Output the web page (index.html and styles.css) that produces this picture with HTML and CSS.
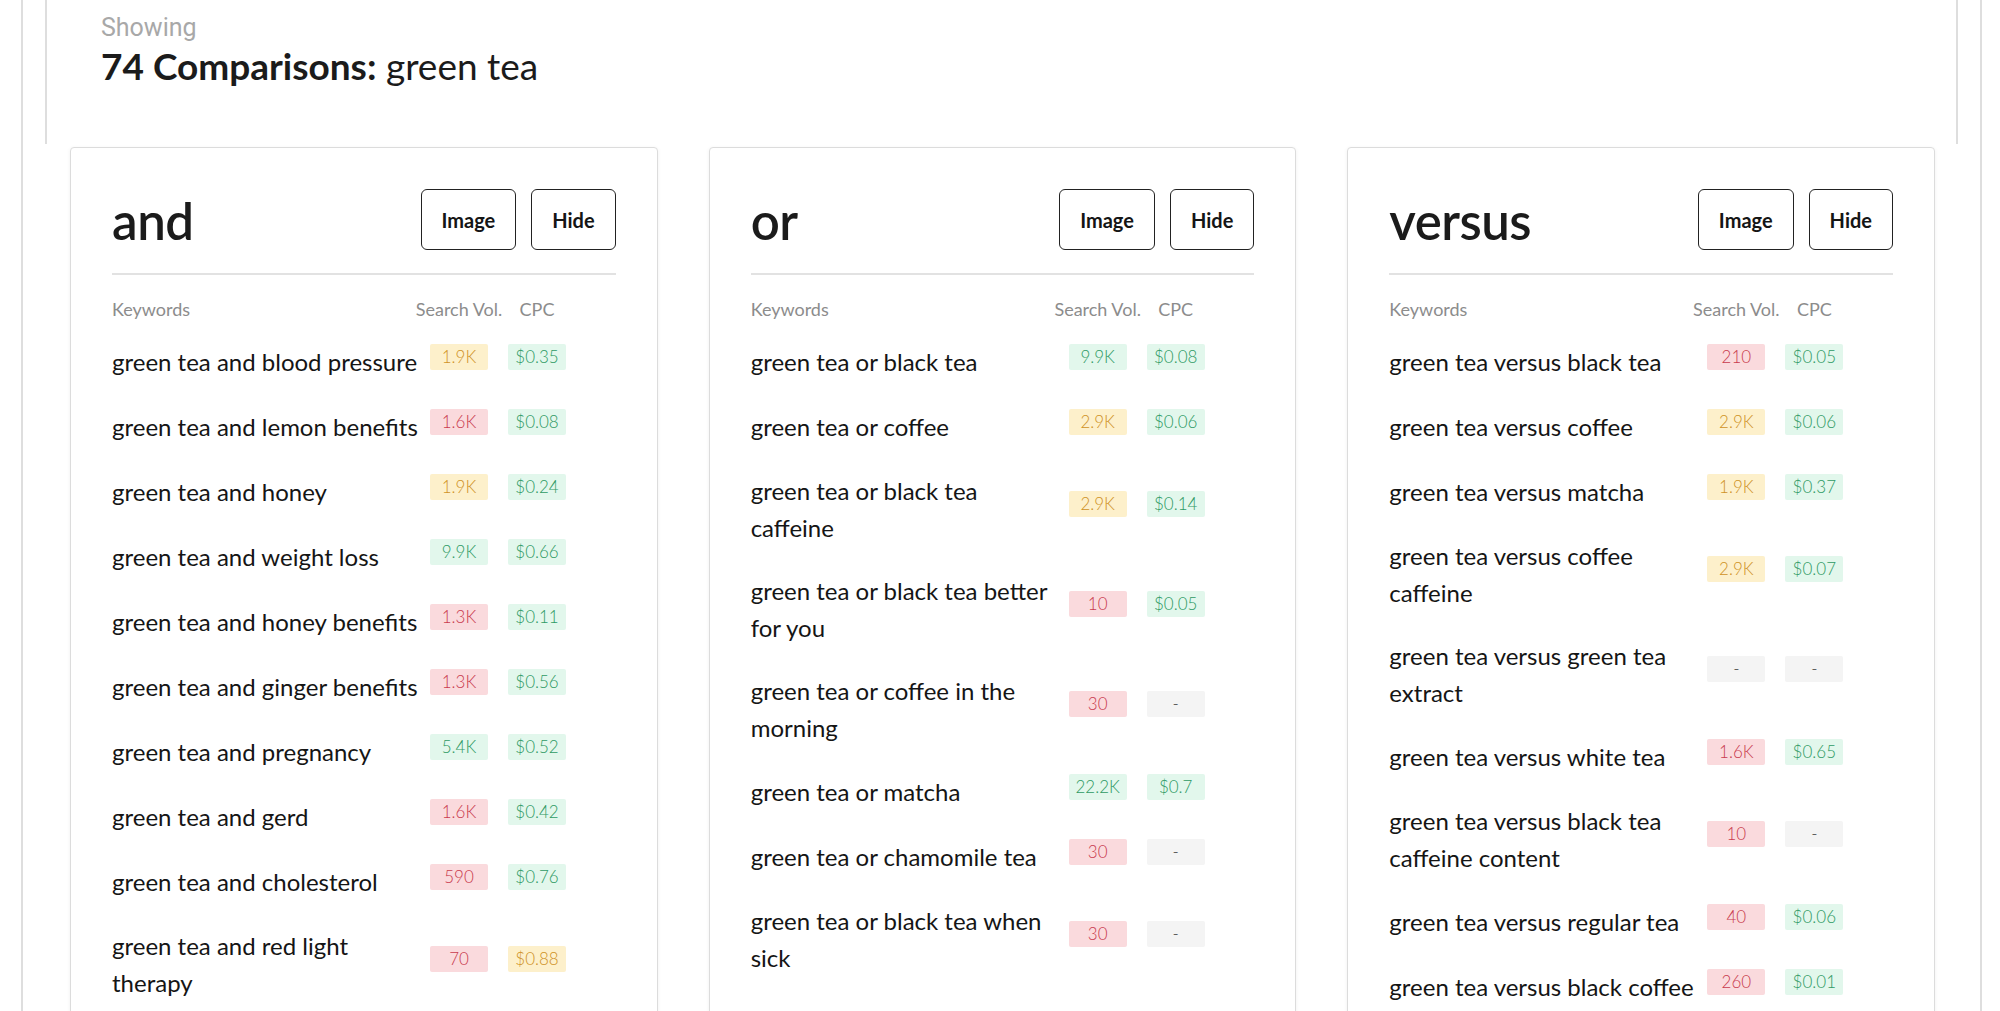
FILE: index.html
```html
<!DOCTYPE html>
<html lang="en">
<head>
<meta charset="utf-8">
<title>74 Comparisons: green tea</title>
<link rel="stylesheet" href="styles.css">
</head>
<body>
<div class="page">
  <header class="summary">
    <div class="showing">Showing</div>
    <h1 class="count"><strong>74 Comparisons:</strong> green tea</h1>
  </header>

  <main class="cards">
    <section class="card">
      <div class="card-head">
        <h2 class="card-title">and</h2>
        <div class="actions"><button class="btn">Image</button><button class="btn">Hide</button></div>
      </div>
      <div class="row head-row"><span class="kw">Keywords</span><span class="col vol">Search Vol.</span><span class="col cpc">CPC</span></div>
      <div class="row"><span class="kw">green tea and blood pressure</span><span class="badge vol y">1.9K</span><span class="badge cpc g">$0.35</span></div>
      <div class="row"><span class="kw">green tea and lemon benefits</span><span class="badge vol r">1.6K</span><span class="badge cpc g">$0.08</span></div>
      <div class="row"><span class="kw">green tea and honey</span><span class="badge vol y">1.9K</span><span class="badge cpc g">$0.24</span></div>
      <div class="row"><span class="kw">green tea and weight loss</span><span class="badge vol g">9.9K</span><span class="badge cpc g">$0.66</span></div>
      <div class="row"><span class="kw">green tea and honey benefits</span><span class="badge vol r">1.3K</span><span class="badge cpc g">$0.11</span></div>
      <div class="row"><span class="kw">green tea and ginger benefits</span><span class="badge vol r">1.3K</span><span class="badge cpc g">$0.56</span></div>
      <div class="row"><span class="kw">green tea and pregnancy</span><span class="badge vol g">5.4K</span><span class="badge cpc g">$0.52</span></div>
      <div class="row"><span class="kw">green tea and gerd</span><span class="badge vol r">1.6K</span><span class="badge cpc g">$0.42</span></div>
      <div class="row"><span class="kw">green tea and cholesterol</span><span class="badge vol r">590</span><span class="badge cpc g">$0.76</span></div>
      <div class="row"><span class="kw">green tea and red light therapy</span><span class="badge vol r">70</span><span class="badge cpc y">$0.88</span></div>
    </section>

    <section class="card">
      <div class="card-head">
        <h2 class="card-title">or</h2>
        <div class="actions"><button class="btn">Image</button><button class="btn">Hide</button></div>
      </div>
      <div class="row head-row"><span class="kw">Keywords</span><span class="col vol">Search Vol.</span><span class="col cpc">CPC</span></div>
      <div class="row"><span class="kw">green tea or black tea</span><span class="badge vol g">9.9K</span><span class="badge cpc g">$0.08</span></div>
      <div class="row"><span class="kw">green tea or coffee</span><span class="badge vol y">2.9K</span><span class="badge cpc g">$0.06</span></div>
      <div class="row"><span class="kw">green tea or black tea caffeine</span><span class="badge vol y">2.9K</span><span class="badge cpc g">$0.14</span></div>
      <div class="row"><span class="kw">green tea or black tea better for you</span><span class="badge vol r">10</span><span class="badge cpc g">$0.05</span></div>
      <div class="row"><span class="kw">green tea or coffee in the morning</span><span class="badge vol r">30</span><span class="badge cpc n">-</span></div>
      <div class="row"><span class="kw">green tea or matcha</span><span class="badge vol g">22.2K</span><span class="badge cpc g">$0.7</span></div>
      <div class="row"><span class="kw">green tea or chamomile tea</span><span class="badge vol r">30</span><span class="badge cpc n">-</span></div>
      <div class="row"><span class="kw">green tea or black tea when sick</span><span class="badge vol r">30</span><span class="badge cpc n">-</span></div>
    </section>

    <section class="card">
      <div class="card-head">
        <h2 class="card-title">versus</h2>
        <div class="actions"><button class="btn">Image</button><button class="btn">Hide</button></div>
      </div>
      <div class="row head-row"><span class="kw">Keywords</span><span class="col vol">Search Vol.</span><span class="col cpc">CPC</span></div>
      <div class="row"><span class="kw">green tea versus black tea</span><span class="badge vol r">210</span><span class="badge cpc g">$0.05</span></div>
      <div class="row"><span class="kw">green tea versus coffee</span><span class="badge vol y">2.9K</span><span class="badge cpc g">$0.06</span></div>
      <div class="row"><span class="kw">green tea versus matcha</span><span class="badge vol y">1.9K</span><span class="badge cpc g">$0.37</span></div>
      <div class="row"><span class="kw">green tea versus coffee caffeine</span><span class="badge vol y">2.9K</span><span class="badge cpc g">$0.07</span></div>
      <div class="row"><span class="kw">green tea versus green tea extract</span><span class="badge vol n">-</span><span class="badge cpc n">-</span></div>
      <div class="row"><span class="kw">green tea versus white tea</span><span class="badge vol r">1.6K</span><span class="badge cpc g">$0.65</span></div>
      <div class="row"><span class="kw">green tea versus black tea caffeine content</span><span class="badge vol r">10</span><span class="badge cpc n">-</span></div>
      <div class="row"><span class="kw">green tea versus regular tea</span><span class="badge vol r">40</span><span class="badge cpc g">$0.06</span></div>
      <div class="row"><span class="kw">green tea versus black coffee</span><span class="badge vol r">260</span><span class="badge cpc g">$0.01</span></div>
    </section>
  </main>
</div>
</body>
</html>
```

FILE: styles.css
```css
* { box-sizing: border-box; }

html, body {
  margin: 0;
  padding: 0;
  background: #ffffff;
}

body {
  font-family: "Lato", "Open Sans", "Noto Sans", sans-serif;
  color: #1b1b1b;
}

.page {
  margin: 0 18px 0 21px;
  border-left: 2px solid #dedede;
  border-right: 2px solid #dedede;
  min-height: 1011px;
}

.summary {
  margin: 0 22px;
  height: 144px;
  border-left: 2px solid #dedede;
  border-right: 2px solid #dedede;
  padding: 13px 0 0 54px;
}

.showing {
  font-family: "Roboto", "Liberation Sans", sans-serif;
  font-size: 25px;
  line-height: 30px;
  color: #a8a8a8;
}

.count {
  margin: 0;
  font-size: 37px;
  line-height: 46px;
  font-weight: 400;
  color: #1b1b1b;
}

.count strong {
  font-weight: 700;
}

.cards {
  display: grid;
  grid-template-columns: repeat(3, 1fr);
  column-gap: 51px;
  padding: 3px 45px 0 47px;
}

.card {
  border: 1.5px solid #dcdcdc;
  border-radius: 4px;
  box-shadow: 0 1px 4px rgba(0, 0, 0, 0.06);
  padding: 41px 41px 40px 41px;
  background: #fff;
}

.card-head {
  display: flex;
  align-items: center;
  justify-content: space-between;
  height: 61px;
  margin-bottom: 23px;
}

.card-title {
  margin: 0;
  font-size: 51px;
  font-weight: 600;
  line-height: 1;
  letter-spacing: -0.5px;
  color: #1b1b1b;
  padding-top: 2px;
}

.actions {
  display: flex;
  gap: 15px;
}

.btn {
  height: 61px;
  padding: 0 20px;
  border: 1.5px solid #222;
  border-radius: 6px;
  background: #fff;
  font-family: "Lato", "Open Sans", sans-serif;
  font-size: 20px;
  font-weight: 700;
  color: #151515;
}

.head-row {
  border-top: 2px solid #e2e2e2;
  padding-top: 23px !important;
  padding-bottom: 9px !important;
  min-height: 0 !important;
  font-size: 18px;
  line-height: 22px;
  color: #8c8c8c;
}

.row {
  display: flex;
  align-items: center;
  min-height: 65px;
  padding: 13px 0;
}

.kw {
  width: 309px;
  flex: none;
  margin-right: 9px;
}

.row:not(.head-row) .kw {
  font-size: 24px;
  line-height: 37px;
  color: #151515;
}

.col {
  width: 58px;
  flex: none;
  display: flex;
  justify-content: center;
  white-space: nowrap;
}

.cpc { margin-left: 20px; }

.badge {
  width: 58px;
  height: 26px;
  flex: none;
  margin-bottom: 10px;
  border-radius: 2px;
  font-size: 17px;
  font-weight: 300;
  line-height: 26px;
  text-align: center;
}

.badge.y { background: #fdf0cb; color: #cf9226; }
.badge.r { background: #fadadd; color: #c93a4e; }
.badge.g { background: #e2f7ec; color: #2f9a64; }
.badge.n { background: #f4f4f4; color: #333; }
```
